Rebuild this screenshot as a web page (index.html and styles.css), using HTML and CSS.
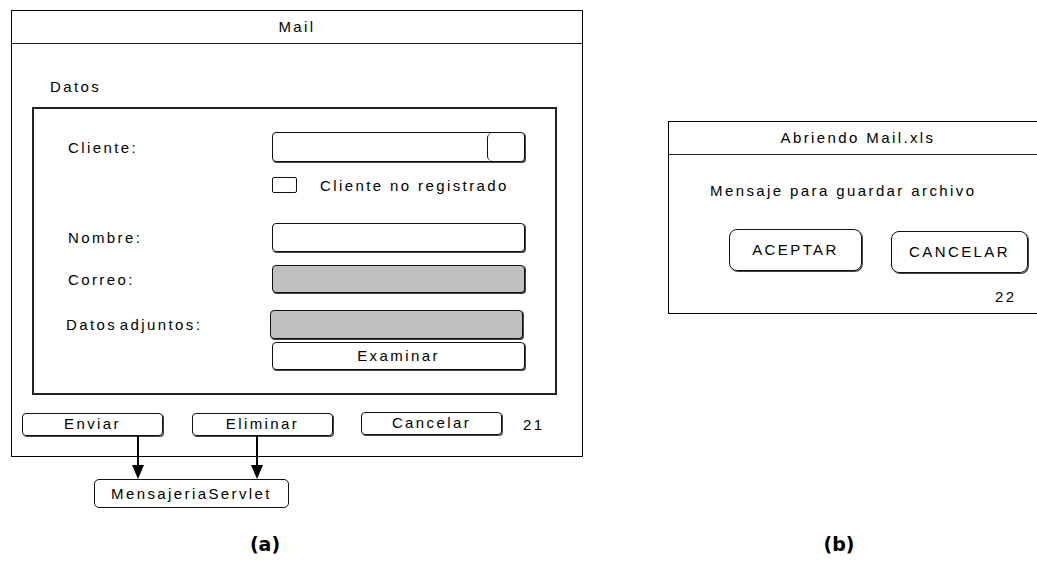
FILE: index.html
```html
<!DOCTYPE html>
<html lang="es">

<head>
    <title>Mail</title>
    <link rel="stylesheet" href="styles.css">
</head>

<body>

    <div id="page">

        <div class="figures">

            <div class="fig fig-a">
                <div class="window mail">
                    <div class="title">Mail</div>

                    <div class="group-label">Datos</div>
                    <div class="group">
                        <div class="row row-cliente">
                            <span class="label">Cliente:</span>
                            <div class="field combo"><span class="combo-btn"></span></div>
                        </div>
                        <div class="row row-check">
                            <span class="checkbox"></span>
                            <span class="check-text">Cliente no registrado</span>
                        </div>
                        <div class="row row-nombre">
                            <span class="label">Nombre:</span>
                            <div class="field"></div>
                        </div>
                        <div class="row row-correo">
                            <span class="label">Correo:</span>
                            <div class="field grey"></div>
                        </div>
                        <div class="row row-adjuntos">
                            <span class="label label-adj">Datos adjuntos:</span>
                            <div class="field grey field-adj"></div>
                        </div>
                        <div class="row row-examinar">
                            <div class="field btn-examinar">Examinar</div>
                        </div>
                    </div>

                    <div class="actions">
                        <div class="btn">Enviar</div>
                        <div class="btn">Eliminar</div>
                        <div class="btn btn-cancel">Cancelar</div>
                        <span class="num">21</span>
                    </div>
                </div>

                <div class="servlet">MensajeriaServlet</div>

                <svg class="arrows" width="572" height="500" viewBox="0 0 572 500">
                    <line x1="127" y1="426" x2="127" y2="457" stroke="#000" stroke-width="2"/>
                    <polygon points="121,455 133,455 127,469" fill="#000"/>
                    <line x1="246" y1="426" x2="246" y2="457" stroke="#000" stroke-width="2"/>
                    <polygon points="240,455 252,455 246,469" fill="#000"/>
                </svg>
            </div>

            <div class="fig fig-b">
                <div class="window dialog">
                    <div class="title">Abriendo Mail.xls</div>
                    <div class="message">Mensaje para guardar archivo</div>
                    <div class="dialog-buttons">
                        <div class="big-btn btn-ok">ACEPTAR</div>
                        <div class="big-btn btn-no">CANCELAR</div>
                    </div>
                    <div class="num num-b">22</div>
                </div>
            </div>

        </div>

        <div class="captions">
            <span class="cap cap-a">(a)</span>
            <span class="cap cap-b">(b)</span>
        </div>

    </div>

</body>
</html>
```

FILE: styles.css
```css
        body {
            font-family: 'Liberation Sans', Arial, sans-serif;
            font-size: 15px;
            letter-spacing: 2.4px;
            color: #000;
            background-color: #fff;
            margin: 0;
            padding: 0;
        }

        #page {
            width: 1037px;
            height: 562px;
            overflow: hidden;
        }

        .figures {
            display: flex;
            align-items: flex-start;
            height: 508px;
        }

        .fig-a {
            position: relative;
            margin-left: 11px;
            margin-top: 10px;
            width: 572px;
        }

        .fig-b {
            margin-left: 85px;
            margin-top: 121px;
        }

        .window {
            border: 1px solid #000;
            background-color: #fff;
            box-sizing: border-box;
        }

        .title {
            height: 32px;
            line-height: 32px;
            text-align: center;
            border-bottom: 1px solid #222;
        }

        /* ventana Mail */
        .mail {
            width: 572px;
        }

        .group-label {
            margin: 34px 0 11px 38px;
            line-height: 18px;
        }

        .group {
            margin-left: 20px;
            width: 525px;
            height: 288px;
            box-sizing: border-box;
            border: 2px solid #222;
            padding: 23px 0 0 34px;
        }

        .row {
            display: flex;
            align-items: center;
        }

        .label {
            width: 204px;
            flex-shrink: 0;
        }

        .field {
            width: 253px;
            box-sizing: border-box;
            border: 1px solid #111;
            border-radius: 4px;
            background-color: #fff;
            box-shadow: 1px 1px 0 #444;
        }

        .grey {
            background-color: #c0c0c0;
        }

        .row-cliente .field {
            height: 30px;
            display: flex;
            justify-content: flex-end;
        }

        .combo-btn {
            width: 37px;
            height: 100%;
            box-sizing: border-box;
            border-left: 1px solid #111;
            border-radius: 5px;
        }

        .row-check {
            margin-top: 15px;
            height: 16px;
            padding-left: 204px;
        }

        .checkbox {
            width: 25px;
            height: 16px;
            box-sizing: border-box;
            border: 1px solid #111;
            border-radius: 2px;
        }

        .check-text {
            margin-left: 23px;
        }

        .row-nombre {
            margin-top: 30px;
        }

        .row-nombre .field {
            height: 29px;
        }

        .row-correo {
            margin-top: 13px;
        }

        .row-correo .field {
            height: 28px;
        }

        .row-adjuntos {
            margin-top: 17px;
        }

        .label-adj {
            margin-left: -2px;
            width: 204px;
            word-spacing: -4px;
        }

        .field-adj {
            height: 29px;
        }

        .row-examinar {
            margin-top: 3px;
            padding-left: 204px;
        }

        .btn-examinar {
            height: 28px;
            line-height: 26px;
            text-align: center;
        }

        .actions {
            display: flex;
            align-items: center;
            margin-top: 18px;
            padding: 0 0 20px 10px;
        }

        .btn {
            width: 141px;
            height: 23px;
            line-height: 20px;
            box-sizing: border-box;
            border: 1px solid #111;
            border-radius: 4px;
            text-align: center;
            margin-right: 29px;
            box-shadow: 1px 1px 0 #444;
        }

        .btn-cancel {
            margin-right: 21px;
            margin-left: -1px;
            transform: translateY(-1px);
        }

        .servlet {
            margin: 22px 0 0 83px;
            width: 195px;
            height: 29px;
            line-height: 27px;
            box-sizing: border-box;
            border: 1px solid #111;
            border-radius: 5px;
            text-align: center;
        }

        .arrows {
            position: absolute;
            top: 0;
            left: 0;
            pointer-events: none;
        }

        /* dialogo */
        .dialog {
            width: 380px;
            height: 193px;
        }

        .message {
            margin: 27px 0 0 41px;
            line-height: 18px;
        }

        .dialog-buttons {
            display: flex;
            align-items: flex-start;
            margin-top: 29px;
            padding-left: 60px;
        }

        .big-btn {
            height: 42px;
            line-height: 40px;
            box-sizing: border-box;
            border: 1px solid #111;
            border-radius: 8px;
            text-align: center;
            box-shadow: 1px 1px 0 #444;
        }

        .btn-ok {
            width: 133px;
        }

        .btn-no {
            width: 137px;
            margin-left: 29px;
            margin-top: 2px;
        }

        .num-b {
            margin: 15px 0 0 326px;
            line-height: 18px;
        }

        .captions {
            display: flex;
            margin-top: 24px;
        }

        .cap {
            font-family: 'DejaVu Sans', sans-serif;
            font-weight: bold;
            font-size: 19px;
            letter-spacing: 0;
            line-height: 24px;
            width: 100px;
            text-align: center;
        }

        .cap-a {
            margin-left: 215px;
        }

        .cap-b {
            margin-left: 474px;
        }
```
